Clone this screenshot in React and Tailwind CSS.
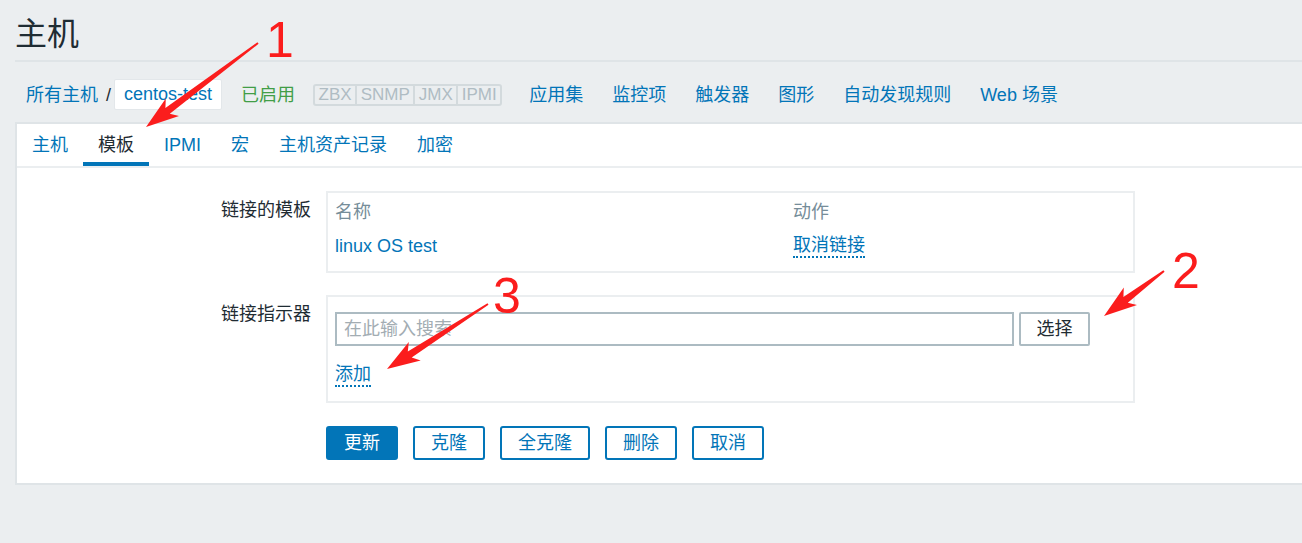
import React from "react";

const FONT = "font-[family-name:'Liberation_Sans','Noto_Sans_CJK_SC',sans-serif]";

function arrowPoints(x1, y1, x2, y2) {
  const dx = x2 - x1, dy = y2 - y1;
  const L = Math.hypot(dx, dy);
  const ux = dx / L, uy = dy / L;
  const nx = -uy, ny = ux;
  const local = [
    [0, 1],
    [L - 27, 3.6],
    [L - 33, 11],
    [L, 0],
    [L - 33, -11],
    [L - 27, -3.6],
    [0, -1],
  ];
  return local
    .map(([t, w]) => `${(x1 + ux * t + nx * w).toFixed(1)},${(y1 + uy * t + ny * w).toFixed(1)}`)
    .join(" ");
}

function Annotations() {
  const arrows = [
    [258, 43, 146, 127],
    [1164, 271, 1104, 316],
    [488, 304, 387, 369],
  ];
  return (
    <>
      <svg className="absolute left-0 top-0 pointer-events-none" width="1302" height="543" viewBox="0 0 1302 543">
        {arrows.map((a, i) => (
          <polygon key={i} points={arrowPoints(...a)} fill="#fb1d1d" />
        ))}
      </svg>
      <span className="absolute left-[266px] top-[15px] text-[50px] leading-[50px] text-[#fb1d1d]">1</span>
      <span className="absolute left-[1172px] top-[246px] text-[50px] leading-[50px] text-[#fb1d1d]">2</span>
      <span className="absolute left-[493px] top-[271px] text-[50px] leading-[50px] text-[#fb1d1d]">3</span>
    </>
  );
}

export default function App() {
  const tabs = ["主机", "模板", "IPMI", "宏", "主机资产记录", "加密"];
  const links = ["应用集", "监控项", "触发器", "图形", "自动发现规则", "Web 场景"];
  const tags = ["ZBX", "SNMP", "JMX", "IPMI"];
  const buttons = ["克隆", "全克隆", "删除", "取消"];

  return (
    <div className={`relative w-[1302px] h-[543px] overflow-hidden bg-[#ebeef0] text-[#1f2c33] text-[18px] ${FONT}`}>
      {/* Header */}
      <div className="ml-[15px] pt-[14px] pb-[6px] border-b-2 border-[#dfe4e7]">
        <h1 className="text-[32px] leading-[40px] font-normal">主机</h1>
      </div>

      {/* Breadcrumb / nav row */}
      <div className="mt-[17px] h-[31px] pl-[26px] flex items-center whitespace-nowrap">
        <span className="text-[#0275b8] leading-[24px]">所有主机</span>
        <span className="ml-[8px] leading-[24px]">/</span>
        <span className="ml-[3px] h-[31px] px-[9px] flex items-center bg-white border border-[#e3e7ea] rounded-[2px] text-[#0275b8]">
          centos-test
        </span>
        <span className="ml-[19px] text-[#429e47] leading-[24px]">已启用</span>
        <div className="ml-[18px] flex h-[22px] border-2 border-[#d3dadd] rounded-[3px] bg-[#ebeef0]">
          {tags.map((t, i) => (
            <span
              key={t}
              className={`px-[3.5px] text-[17px] leading-[18px] text-[#afbcc3] flex items-center ${i > 0 ? "border-l-2 border-[#d3dadd]" : ""}`}
            >
              {t}
            </span>
          ))}
        </div>
        <div className="ml-[27px] flex gap-[29px]">
          {links.map((l) => (
            <span key={l} className="text-[#0275b8] leading-[24px]">{l}</span>
          ))}
        </div>
      </div>

      {/* Panel */}
      <div className="mt-[12px] ml-[15px] w-[1320px] bg-white border-2 border-[#dfe4e7]">
        <div className="flex border-b-2 border-[#ebeef0]">
          {tabs.map((t, i) => (
            <div
              key={t}
              className={`h-[42px] pt-[3px] px-[15px] flex items-center border-b-4 ${
                i === 1 ? "border-[#0275b8] text-[#1f2c33]" : "border-transparent text-[#0275b8]"
              }`}
            >
              <span className="leading-[24px]">{t}</span>
            </div>
          ))}
        </div>

        <div className="pt-[23px] pb-[23px]">
          {/* Linked templates */}
          <div className="flex">
            <div className="w-[294px] text-right pt-[7px] leading-[24px]">链接的模板</div>
            <div className="ml-[15px] w-[809px] border-2 border-[#ebeef0] px-[7px] pt-[2px] pb-[8px]">
              <div className="grid grid-cols-[458px_1fr] h-[34px] items-center text-[#768d99] leading-[24px]">
                <span>名称</span>
                <span>动作</span>
              </div>
              <div className="grid grid-cols-[458px_1fr] h-[34px] items-center leading-[22px]">
                <span className="text-[#0275b8]">linux OS test</span>
                <div className="flex">
                  <span className="text-[#0275b8] leading-[22px] border-b-2 border-dotted border-[#0275b8]">
                    取消链接
                  </span>
                </div>
              </div>
            </div>
          </div>

          {/* Link new templates */}
          <div className="flex mt-[22px]">
            <div className="w-[294px] text-right pt-[7px] leading-[24px]">链接指示器</div>
            <div className="ml-[15px] w-[809px] border-2 border-[#ebeef0] px-[7px] pt-[15px] pb-[14px]">
              <div className="flex">
                <div className="w-[679px] h-[34px] border-2 border-[#acbbc2] px-[7px] flex items-center text-[#a3adb3] leading-[24px]">
                  在此输入搜索
                </div>
                <div className="ml-[5px] w-[71px] h-[34px] border-2 border-[#acbbc2] rounded-[2px] bg-white flex items-center justify-center leading-[24px]">
                  选择
                </div>
              </div>
              <div className="mt-[17px] flex">
                <span className="text-[#0275b8] leading-[22px] border-b-2 border-dotted border-[#0275b8]">
                  添加
                </span>
              </div>
            </div>
          </div>

          {/* Buttons */}
          <div className="flex mt-[23px]">
            <div className="w-[294px]" />
            <div className="ml-[15px] flex gap-[15px]">
              <div className="h-[34px] px-[16px] border-2 border-[#0275b8] bg-[#0275b8] rounded-[3px] text-white flex items-center leading-[24px]">
                更新
              </div>
              {buttons.map((b) => (
                <div
                  key={b}
                  className="h-[34px] px-[16px] border-2 border-[#0275b8] bg-white rounded-[3px] text-[#0275b8] flex items-center leading-[24px]"
                >
                  {b}
                </div>
              ))}
            </div>
          </div>
        </div>
      </div>

      <Annotations />
    </div>
  );
}
